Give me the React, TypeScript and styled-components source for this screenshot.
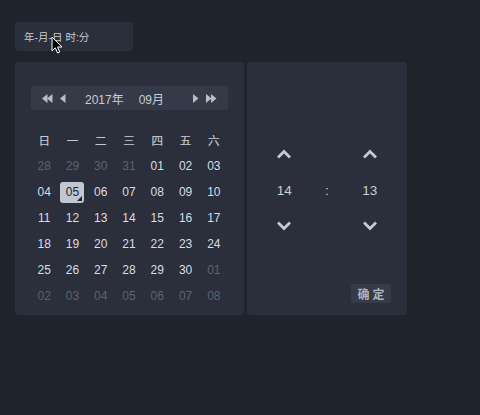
import React from "react";
import styled, { createGlobalStyle } from "styled-components";

const Global = createGlobalStyle`
  html, body { margin: 0; padding: 0; background: #1f232c; }
  body { font-family: "Liberation Sans", "Noto Sans CJK SC", sans-serif; width: 480px; height: 415px; overflow: hidden; }
`;

const Page = styled.div`
  position: relative;
  padding: 22px 0 0 15px;
  width: 480px;
  height: 415px;
  box-sizing: border-box;
`;

const Input = styled.div`
  width: 118px;
  height: 29px;
  box-sizing: border-box;
  background: #2a2f3b;
  border-radius: 3px;
  padding-left: 9px;
  display: flex;
  align-items: center;
  font-size: 10.5px;
  color: #c6cad2;
`;

const Panels = styled.div`
  display: flex;
  gap: 3px;
  margin-top: 11px;
`;

const Panel = styled.div<{ $w: number }>`
  width: ${(p) => p.$w}px;
  height: 253px;
  background: #2a2f3b;
  border-radius: 3px;
  box-sizing: border-box;
`;

const CalPanel = styled(Panel)`
  padding: 24px 16px 0 16px;
`;

const Header = styled.div`
  height: 24px;
  background: #343a47;
  border-radius: 3px;
  display: flex;
  align-items: center;
  padding: 0 11px;
  font-size: 12px;
  color: #c9cdd5;
`;

const IconGroup = styled.div`
  display: flex;
  align-items: center;
  gap: 7px;
`;

const Title = styled.div`
  flex: 1;
  display: flex;
  justify-content: center;
  gap: 15px;
  padding-right: 10px;
`;

const Grid = styled.div`
  display: grid;
  grid-template-columns: repeat(7, 1fr);
  grid-auto-rows: 26px;
  margin-top: 17px;
  margin-left: -1px;
`;

const Week = styled.div`
  display: flex;
  align-items: center;
  justify-content: center;
  font-size: 11.5px;
  color: #c3c8d0;
  -webkit-text-stroke: 0.2px #c3c8d0;
`;

const Day = styled.div<{ $muted?: boolean }>`
  display: flex;
  align-items: center;
  justify-content: center;
  font-size: 12px;
  color: ${(p) => (p.$muted ? "#5c6270" : "#dadde3")};
`;

const Selected = styled.span`
  position: relative;
  width: 24px;
  height: 21px;
  border-radius: 3px;
  background: #c1c7d2;
  color: #1f232c;
  display: flex;
  align-items: center;
  justify-content: center;
  &::after {
    content: "";
    position: absolute;
    right: 2px;
    bottom: 2px;
    border-left: 5px solid transparent;
    border-bottom: 5px solid #1f232c;
  }
`;

const TimePanel = styled(Panel)`
  display: flex;
  flex-direction: column;
  padding: 87px 16px 12px 16px;
`;

const Spinner = styled.div`
  display: grid;
  grid-template-columns: 1fr 1fr 1fr;
`;

const Col = styled.div`
  display: flex;
  flex-direction: column;
  align-items: center;
  color: #c9cdd5;
  font-size: 13.5px;
`;

const Num = styled.div`
  height: 41px;
  margin: 11px 0 10px;
  display: flex;
  align-items: center;
`;

const Colon = styled(Col)`
  justify-content: center;
  padding-top: 1px;
`;

const Confirm = styled.div`
  margin-top: auto;
  align-self: flex-end;
  width: 40px;
  height: 19px;
  background: #353b48;
  border-radius: 2px;
  color: #aeb4bf;
  font-size: 12px;
  font-weight: bold;
  letter-spacing: 3px;
  padding-left: 3px;
  box-sizing: border-box;
  display: flex;
  align-items: center;
  justify-content: center;
`;

const Cursor = styled.svg`
  position: absolute;
  left: 51px;
  top: 36px;
`;

const Tri = ({ dir, double }: { dir: "l" | "r"; double?: boolean }) => {
  const one = (x: number) =>
    dir === "l"
      ? `M${x + 5.5} 0 L${x} 4.5 L${x + 5.5} 9 Z`
      : `M${x} 0 L${x + 5.5} 4.5 L${x} 9 Z`;
  return (
    <svg width={double ? 11 : 6} height={9} viewBox={`0 0 ${double ? 11 : 6} 9`}>
      <path d={one(0)} fill="#b8bec9" />
      {double && <path d={one(5)} fill="#b8bec9" />}
    </svg>
  );
};

const Chevron = ({ up }: { up?: boolean }) => (
  <svg width="16" height="10" viewBox="0 0 16 10">
    <path
      d={up ? "M2 8.5 L8 2.5 L14 8.5" : "M2 1.5 L8 7.5 L14 1.5"}
      fill="none"
      stroke="#c4cad4"
      strokeWidth="2.8"
    />
  </svg>
);

const weeks = ["日", "一", "二", "三", "四", "五", "六"];

const days: { d: string; m?: boolean }[] = [
  ...["28", "29", "30", "31"].map((d) => ({ d, m: true })),
  ...Array.from({ length: 30 }, (_, i) => ({ d: String(i + 1).padStart(2, "0") })),
  ...["01", "02", "03", "04", "05", "06", "07", "08"].map((d) => ({ d, m: true })),
];

export default function App() {
  return (
    <>
      <Global />
      <Page>
        <Input>年-月-日 时:分</Input>
        <Panels>
          <CalPanel $w={229}>
            <Header>
              <IconGroup>
                <Tri dir="l" double />
                <Tri dir="l" />
              </IconGroup>
              <Title>
                <span>2017年</span>
                <span>09月</span>
              </Title>
              <IconGroup>
                <Tri dir="r" />
                <Tri dir="r" double />
              </IconGroup>
            </Header>
            <Grid>
              {weeks.map((w) => (
                <Week key={w}>{w}</Week>
              ))}
              {days.map((x, i) => (
                <Day key={i} $muted={x.m}>
                  {!x.m && x.d === "05" ? <Selected>05</Selected> : x.d}
                </Day>
              ))}
            </Grid>
          </CalPanel>
          <TimePanel $w={160}>
            <Spinner>
              <Col>
                <Chevron up />
                <Num>14</Num>
                <Chevron />
              </Col>
              <Colon>:</Colon>
              <Col>
                <Chevron up />
                <Num>13</Num>
                <Chevron />
              </Col>
            </Spinner>
            <Confirm>确定</Confirm>
          </TimePanel>
        </Panels>
        <Cursor width="12" height="18" viewBox="0 0 12 18">
          <path d="M1 1 L1 15 L4.3 11.8 L6.6 17 L8.8 16 L6.6 11 L11 11 Z" fill="#000" stroke="#fff" strokeWidth="1" />
        </Cursor>
      </Page>
    </>
  );
}
